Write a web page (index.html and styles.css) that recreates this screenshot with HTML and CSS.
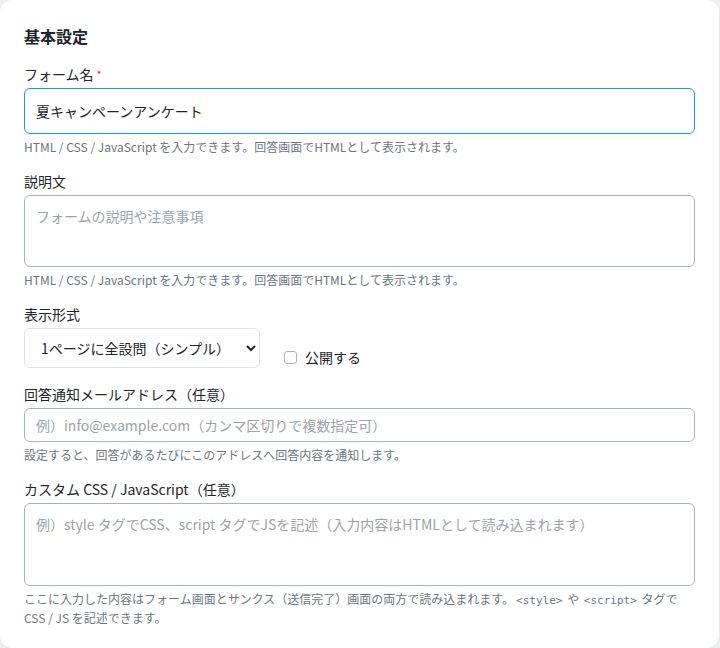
FILE: index.html
```html
<!DOCTYPE html>
<html lang="ja">
<head>
    <meta charset="UTF-8">
    <meta name="viewport" content="width=device-width, initial-scale=1.0">
    <title>フォーム設定</title>
    <link rel="stylesheet" href="styles.css">
</head>
<body>
    <div class="card">
        <h2 class="card__title">基本設定</h2>

        <div class="field">
            <label for="form-name">フォーム名<span class="required">*</span></label>
            <input type="text" id="form-name" class="input input--focus" value="夏キャンペーンアンケート">
            <p class="help">HTML / CSS / JavaScript を入力できます。回答画面でHTMLとして表示されます。</p>
        </div>

        <div class="field">
            <label for="form-desc">説明文</label>
            <textarea id="form-desc" class="input textarea" placeholder="フォームの説明や注意事項"></textarea>
            <p class="help">HTML / CSS / JavaScript を入力できます。回答画面でHTMLとして表示されます。</p>
        </div>

        <div class="field">
            <label for="form-mode">表示形式</label>
            <div class="row">
                <select id="form-mode" class="select">
                    <option>1ページに全設問（シンプル）</option>
                    <option>1問ずつ表示（ステップ）</option>
                </select>
                <label class="check">
                    <input type="checkbox" id="form-public">
                    <span>公開する</span>
                </label>
            </div>
        </div>

        <div class="field">
            <label for="form-mail">回答通知メールアドレス（任意）</label>
            <input type="text" id="form-mail" class="input input--small" placeholder="例）info@example.com（カンマ区切りで複数指定可）">
            <p class="help">設定すると、回答があるたびにこのアドレスへ回答内容を通知します。</p>
        </div>

        <div class="field">
            <label for="form-custom">カスタム CSS / JavaScript（任意）</label>
            <textarea id="form-custom" class="input textarea textarea--code" placeholder="例）style タグでCSS、script タグでJSを記述（入力内容はHTMLとして読み込まれます）"></textarea>
            <p class="help">ここに入力した内容はフォーム画面とサンクス（送信完了）画面の両方で読み込まれます。<code>&lt;style&gt;</code> や <code>&lt;script&gt;</code> タグで CSS / JS を記述できます。</p>
        </div>
    </div>
</body>
</html>
```

FILE: styles.css
```css
* {
    box-sizing: border-box;
}
body {
    margin: 0;
    padding: 0;
    background: #eef0f2;
    font-family: "Noto Sans CJK JP", "Noto Sans", sans-serif;
    color: #212529;
}
.card {
    width: 719px;
    background: #ffffff;
    border-radius: 12px;
    box-shadow: 0 1px 3px rgba(0, 0, 0, 0.08);
    padding: 22px 24px 22px;
}
.card__title {
    margin: 0 0 14px;
    font-size: 16px;
    font-weight: 700;
    line-height: 28px;
}
.field {
    margin-bottom: 16px;
}
.field:last-child {
    margin-bottom: 0;
}
.field > label {
    display: block;
    font-size: 14px;
    line-height: 21px;
    margin-bottom: 3px;
}
.required {
    color: #dc3545;
    font-size: 11px;
    margin-left: 3px;
    vertical-align: top;
}
.input {
    display: block;
    width: 100%;
    font: inherit;
    font-size: 14px;
    color: #212529;
    border: 1px solid #a7b4b7;
    border-radius: 6px;
    padding: 0 11px;
    height: 46px;
    background: #ffffff;
}
.input::placeholder {
    color: #9aa3ab;
}
.input:focus,
.input--focus {
    outline: none;
    border-color: #17a2b8;
}
.input--small {
    height: 34px;
}
.textarea {
    height: 72px;
    padding: 10px 11px;
    line-height: 21px;
    resize: none;
}
.textarea--code {
    height: 83px;
}
.help {
    margin: 4px 0 0;
    font-size: 12px;
    line-height: 17px;
    color: #6c757d;
}
.help code {
    font-family: "DejaVu Sans Mono", monospace;
    font-size: 11px;
    padding: 0 2px;
}
.row {
    display: flex;
    align-items: flex-end;
    gap: 20px;
}
.select {
    width: 236px;
    height: 40px;
    font: inherit;
    font-size: 14px;
    color: #212529;
    border: 1px solid #dee2e6;
    border-radius: 6px;
    padding: 0 12px;
    background: #ffffff;
}
.check {
    display: flex;
    align-items: center;
    gap: 5px;
    font-size: 14px;
    line-height: 21px;
}
.check input {
    appearance: none;
    width: 13px;
    height: 13px;
    margin: 0 3px 0 4px;
    border: 1px solid #adb5bd;
    border-radius: 3px;
    background: #ffffff;
}
.check input:checked {
    background: #17a2b8;
    border-color: #17a2b8;
}
```
